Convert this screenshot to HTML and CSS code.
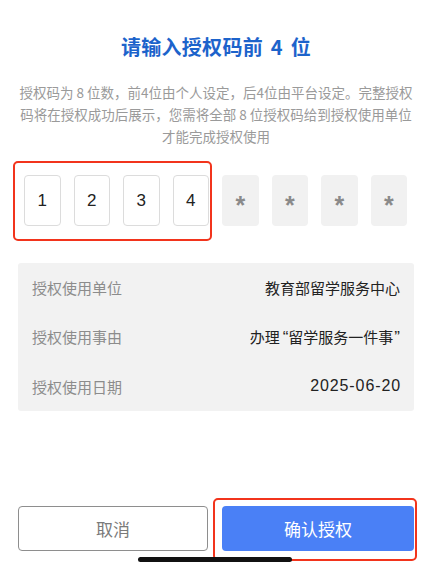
FILE: index.html
```html
<!DOCTYPE html>
<html lang="zh-CN">
<head>
<meta charset="utf-8">
<title>授权码</title>
<link rel="stylesheet" href="styles.css">
</head>
<body>
<div class="page">
  <h1 class="title">请输入授权码前 4 位</h1>
  <p class="desc">授权码为 8 位数，前4位由个人设定，后4位由平台设定。完整授权<br>码将在授权成功后展示，您需将全部 8 位授权码给到授权使用单位<br>才能完成授权使用</p>

  <div class="code-row">
    <div class="cell filled">1</div>
    <div class="cell filled">2</div>
    <div class="cell filled">3</div>
    <div class="cell filled">4</div>
    <div class="cell masked">*</div>
    <div class="cell masked">*</div>
    <div class="cell masked">*</div>
    <div class="cell masked">*</div>
    <div class="highlight code-highlight"></div>
  </div>

  <div class="info">
    <div class="info-row"><span class="label">授权使用单位</span><span class="value">教育部留学服务中心</span></div>
    <div class="info-row"><span class="label">授权使用事由</span><span class="value">办理<span class="quote open">“</span>留学服务一件事<span class="quote close">”</span></span></div>
    <div class="info-row"><span class="label">授权使用日期</span><span class="value date">2025-06-20</span></div>
  </div>

  <div class="actions">
    <button class="btn cancel">取消</button>
    <button class="btn confirm">确认授权</button>
    <div class="highlight confirm-highlight"></div>
  </div>
  <div class="home-bar"></div>
</div>
</body>
</html>
```

FILE: styles.css
```css
* { box-sizing: border-box; }
html, body { margin: 0; padding: 0; background: #fff; }
body {
  font-family: "Noto Sans CJK SC", "Noto Sans", "Liberation Sans", sans-serif;
  color: #222;
}
.page {
  position: relative;
  height: 571px;
  display: flex;
  flex-direction: column;
  padding: 33px 18px 20px;
}
.title {
  margin: 0;
  text-align: center;
  font-size: 20px;
  line-height: 28px;
  font-weight: 700;
  color: #1c63cb;
  letter-spacing: 0.3px;
  word-spacing: 3px;
}
.desc {
  margin: 20px 0 0;
  text-align: center;
  font-size: 13.5px;
  line-height: 22px;
  color: #9a9a9a;
  white-space: nowrap;
}
.code-row {
  position: relative;
  margin: 28px 7px 0 6px;
  display: grid;
  grid-template-columns: repeat(8, 1fr);
  column-gap: 13px;
}
.cell {
  height: 51px;
  border-radius: 4px;
  display: flex;
  align-items: center;
  justify-content: center;
  font-family: "Liberation Sans", "Noto Sans", sans-serif;
  font-size: 17px;
}
.cell.filled {
  background: #fff;
  border: 1.5px solid #dcdcdc;
  color: #222;
}
.cell.masked {
  background: #f1f1f1;
  color: #8a8a8a;
  font-size: 25px;
  font-weight: 700;
  padding-top: 9px;
}
.highlight {
  position: absolute;
  border: 2px solid #f2341c;
  border-radius: 5px;
  pointer-events: none;
}
.code-highlight {
  left: -11px;
  top: -14px;
  width: 199px;
  height: 80px;
}
.info {
  margin-top: 37px;
  height: 148px;
  background: #f2f2f2;
  border-radius: 3px;
  display: flex;
  flex-direction: column;
  padding: 0 14px;
}
.info-row {
  flex: 1;
  display: flex;
  align-items: center;
  justify-content: space-between;
  font-size: 15px;
}
.label { color: #8c8c8c; }
.value { color: #222; }
.quote { font-family: "Liberation Sans", sans-serif; font-size: 17px; line-height: 1; }
.quote.open { padding: 0 0 0 3px; }
.quote.close { padding: 0 0 0 1px; }
.date {
  font-family: "Liberation Sans", sans-serif;
  font-size: 16px;
  letter-spacing: 0.9px;
  margin-right: -1px;
}
.actions {
  position: relative;
  margin-top: auto;
  display: flex;
  gap: 14px;
}
.btn {
  height: 45px;
  border-radius: 4px;
  font-family: "Noto Sans CJK SC", "Noto Sans", sans-serif;
  font-size: 17px;
  padding: 0;
}
.cancel {
  width: 190px;
  background: #fff;
  border: 1px solid #8e8e8e;
  color: #7a7a7a;
}
.confirm {
  flex: 1;
  background: #4a80f6;
  border: none;
  color: #fff;
}
.confirm-highlight {
  left: 195px;
  top: -8px;
  width: 204px;
  height: 63px;
}
.home-bar {
  position: absolute;
  left: 138px;
  top: 557px;
  width: 154px;
  height: 5px;
  border-radius: 3px;
  background: #111;
}
```
